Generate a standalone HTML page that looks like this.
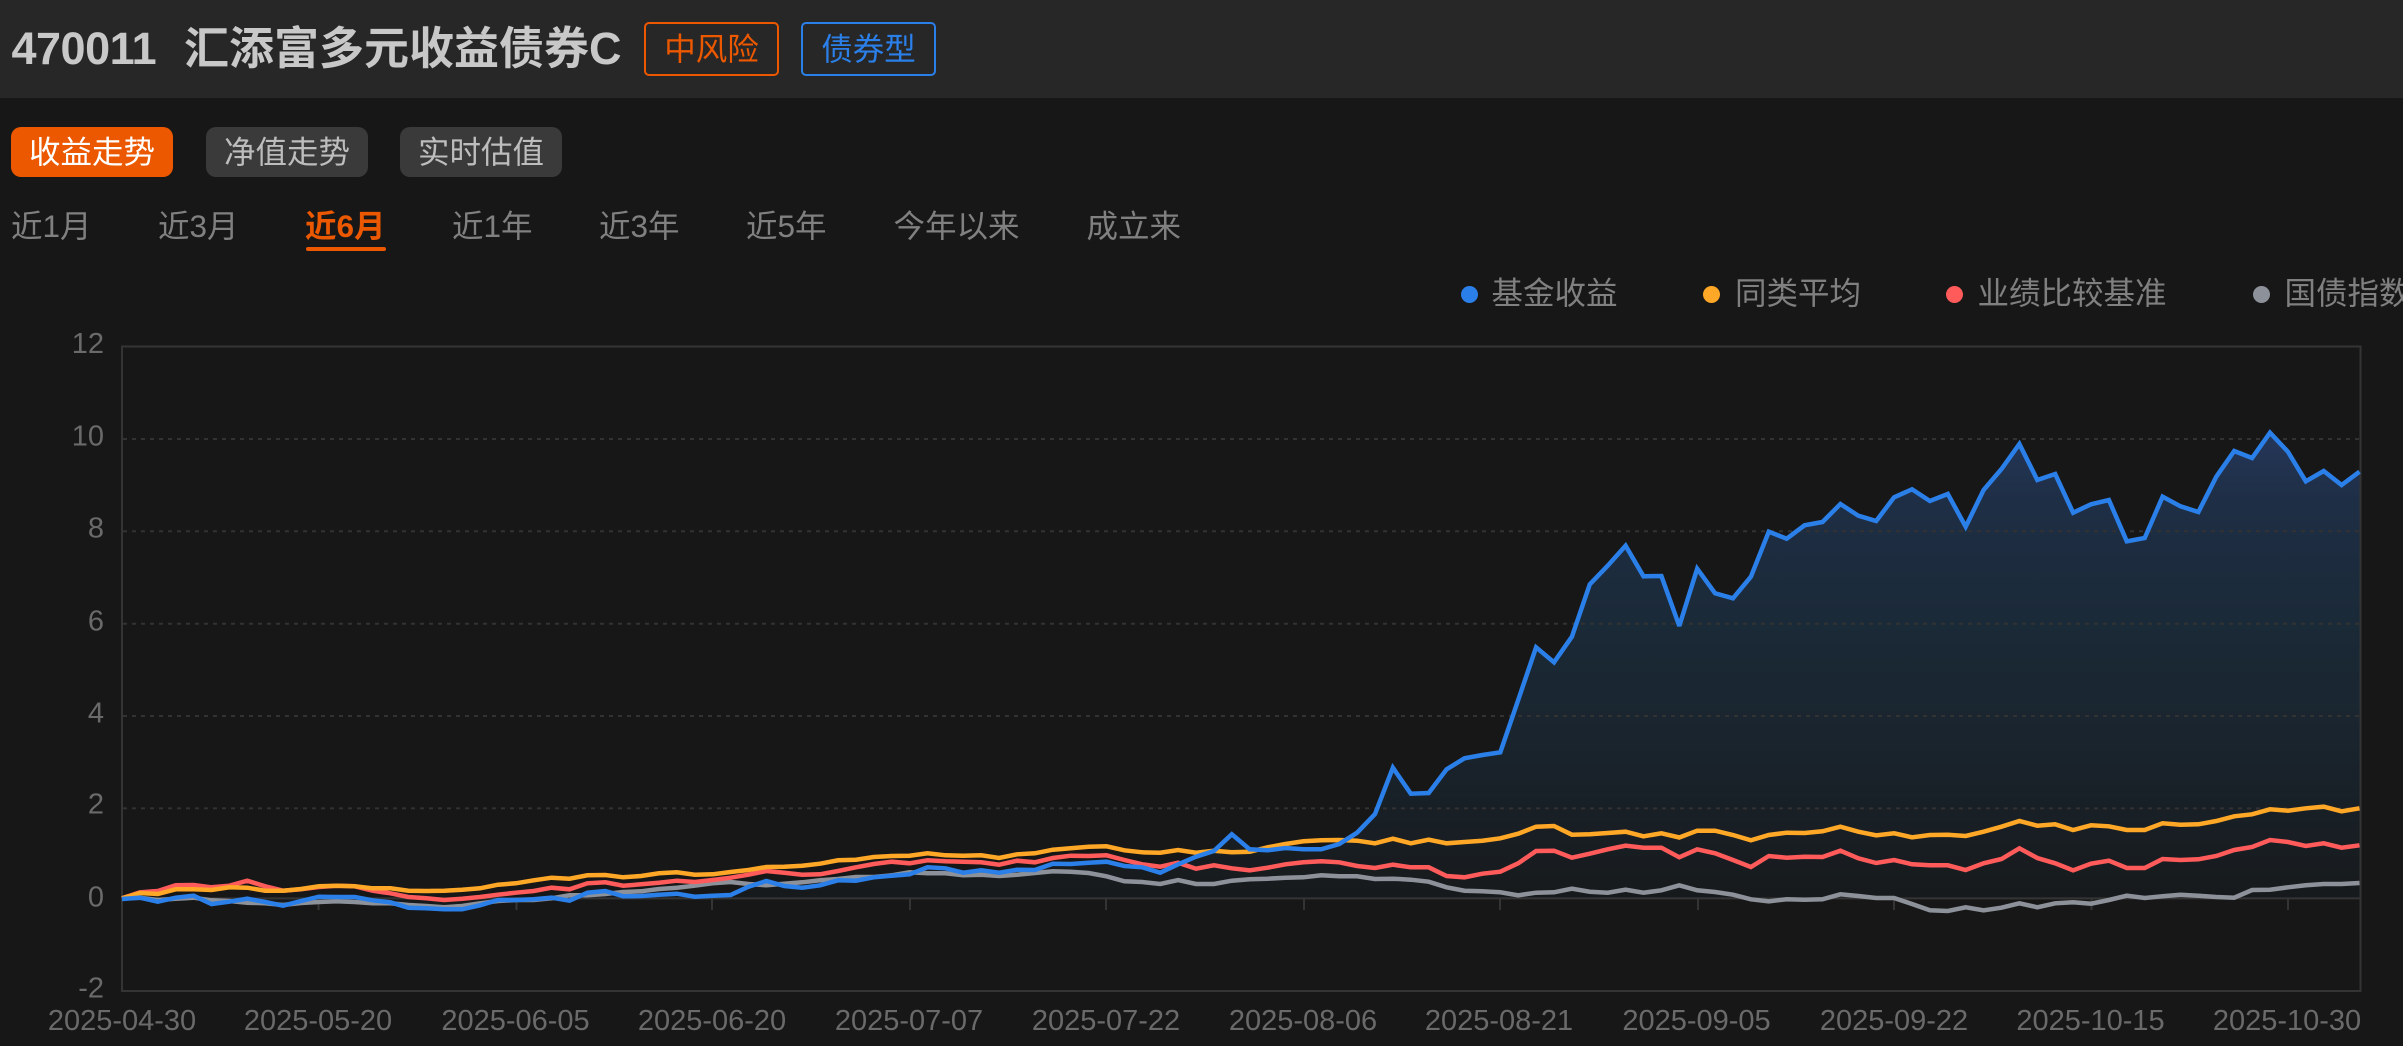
<!DOCTYPE html>
<html lang="zh"><head><meta charset="utf-8"><title>470011 汇添富多元收益债券C</title>
<style>
html,body{margin:0;padding:0;background:#171717;width:2403px;height:1046px;overflow:hidden}
body{position:relative;font-family:"Liberation Sans","Noto Sans CJK SC",sans-serif;font-size:31.5px}
.a{position:absolute;white-space:nowrap}
.hd{left:0;top:0;width:2403px;height:98px;background:#272727}
.num{left:11.5px;top:22px;line-height:54px;font-size:45px;font-weight:700;color:#c8c8c8;letter-spacing:-.5px}
.ttl{left:184px;top:22px;line-height:54px;font-size:45px;font-weight:700;color:#c8c8c8}
.tag{top:22px;height:50px;width:131px;border:2px solid;border-radius:5px;line-height:50px;text-align:center;color:inherit}
.btn{top:127px;height:50px;width:162px;border-radius:10px;line-height:50px;text-align:center;background:#3a3a3a;color:#bdbdbd}
.tab{top:202px;line-height:48px;color:#808080}
.leg{top:269px;line-height:48px;color:#808080}
.dot{top:285.5px;width:17px;height:17px;border-radius:50%}
svg{position:absolute;left:0;top:0}
svg text{font-family:"Liberation Sans",sans-serif;font-size:29px;fill:#6a6a6a}
</style></head><body>
<div class="a hd"></div>
<div class="a num">470011</div>
<div class="a ttl">汇添富多元收益债券C</div>
<div class="a tag" style="left:644px;color:#ec5800;border-color:#ec5800">中风险</div>
<div class="a tag" style="left:801px;color:#2b7fe8;border-color:#2b7fe8">债券型</div>
<div class="a btn" style="left:11px;background:#ec5800;color:#fff">收益走势</div>
<div class="a btn" style="left:206px">净值走势</div>
<div class="a btn" style="left:400px">实时估值</div>
<div class="a tab" style="left:11px">近1月</div>
<div class="a tab" style="left:158px">近3月</div>
<div class="a tab" style="left:305px;color:#ec5800;font-weight:700">近6月</div>
<div class="a" style="left:306px;top:247px;width:80px;height:4px;border-radius:2px;background:#ec5800"></div>
<div class="a tab" style="left:452px">近1年</div>
<div class="a tab" style="left:599px">近3年</div>
<div class="a tab" style="left:746px">近5年</div>
<div class="a tab" style="left:893.5px">今年以来</div>
<div class="a tab" style="left:1086.5px">成立来</div>
<div class="a dot" style="left:1460.5px;background:#2b7fe8"></div><div class="a leg" style="left:1491.5px">基金收益</div>
<div class="a dot" style="left:1703px;background:#ffa726"></div><div class="a leg" style="left:1735px">同类平均</div>
<div class="a dot" style="left:1946px;background:#ff5b5b"></div><div class="a leg" style="left:1977.5px">业绩比较基准</div>
<div class="a dot" style="left:2252.5px;background:#8d9199"></div><div class="a leg" style="left:2284.5px">国债指数</div>
<svg width="2403" height="1046" viewBox="0 0 2403 1046">
<defs><linearGradient id="g" gradientUnits="userSpaceOnUse" x1="0" y1="432" x2="0" y2="898">
<stop offset="0" stop-color="#25375a"/><stop offset=".15" stop-color="#1e2e45"/><stop offset=".4" stop-color="#1b2a38"/><stop offset=".7" stop-color="#19232c"/><stop offset="1" stop-color="#171a1c"/></linearGradient></defs>
<polygon fill="url(#g)" points="122,899 139.9,897.7 157.8,901.7 175.7,897.7 193.6,895.7 211.5,904 229.4,901.7 247.3,898.7 265.2,902 283.1,905.7 301,901 318.9,896.7 336.8,897 354.7,897 372.6,900.3 390.5,902.3 408.4,907.7 426.3,908.3 444.2,909.3 462.1,909.3 480,905.3 497.9,900 515.8,900 533.7,899.3 551.6,897.7 569.5,900.7 587.4,892.7 605.3,891 623.2,896.3 641.1,896 659,894.7 676.9,893.7 694.8,896.7 712.7,895.7 730.6,895 748.5,886.7 766.4,881 784.3,886 802.2,887.7 820.1,885.3 838,880.3 855.9,880.7 873.8,877.3 891.7,875.7 909.6,874.3 927.5,867.3 945.4,868.3 963.3,872.7 981.2,870.3 999.1,872.7 1017,869.7 1034.9,870 1052.8,863.7 1070.7,864 1088.6,862.7 1106.5,861.7 1124.4,866 1142.3,867.3 1160.2,872.7 1178.1,864.3 1196,856.7 1213.9,851 1231.8,834.3 1249.7,849.3 1267.6,850.3 1285.5,848 1303.4,849.3 1321.3,849.3 1339.2,844 1357.1,832.7 1375,814 1392.9,767.7 1410.8,793.7 1428.7,793 1446.6,769.3 1464.5,758.3 1482.4,755 1500.3,752.3 1518.2,700 1536.1,647.3 1554,662.3 1571.9,636.7 1589.8,584.3 1607.7,565.7 1625.6,545.7 1643.5,576.3 1661.4,576 1679.3,626 1697.2,568.7 1715.1,593.3 1733,598.3 1750.9,576.7 1768.8,531.7 1786.7,538.7 1804.6,525.3 1822.5,522 1840.4,504 1858.3,515.7 1876.2,521 1894.1,497.3 1912,489.3 1929.9,501 1947.8,494 1965.7,526.7 1983.6,490 2001.5,469 2019.4,444 2037.3,480 2055.2,474 2073.1,512.7 2091,504.3 2108.9,500 2126.8,541.3 2144.7,538 2162.6,496.7 2180.5,506.3 2198.4,512 2216.3,476.7 2234.2,451 2252.1,458 2270,432.7 2287.9,451.7 2305.8,481.3 2323.7,471 2341.6,485 2359.5,471.7 2359.5,898.5 122,898.5"/>
<g stroke="#323232" stroke-width="2" stroke-dasharray="4 5" fill="none">
<path d="M123 439H2360M123 531.3H2360M123 623.7H2360M123 716H2360M123 808.4H2360"/>
</g>
<g stroke="#343434" stroke-width="2" fill="none">
<path d="M122 346.5H2360.5V991H122ZM122 898.4H2360"/>
<path d="M318.5 898V910M516.5 898V910M712 898V910M910 898V910M1106 898V910M1304 898V910M1500 898V910M1698 898V910M1894 898V910M2091.5 898V910M2288 898V910"/>
</g>
<g fill="none" stroke-width="4.5" stroke-linejoin="miter" stroke-miterlimit="3">
<polyline stroke="#8d9199" points="122,898.3 139.9,897.7 157.8,900 175.7,898.7 193.6,897.7 211.5,900.3 229.4,901 247.3,902.7 265.2,903.3 283.1,905 301,903 318.9,902 336.8,901.3 354.7,902 372.6,903.3 390.5,903.3 408.4,905 426.3,906 444.2,907.3 462.1,906 480,903.3 497.9,901 515.8,900 533.7,900 551.6,898.3 569.5,895.3 587.4,895.3 605.3,894 623.2,892 641.1,891.3 659,889 676.9,887.7 694.8,885.7 712.7,883.3 730.6,882 748.5,884 766.4,885.3 784.3,883.7 802.2,882.3 820.1,880.3 838,879 855.9,877 873.8,877 891.7,875.3 909.6,872.3 927.5,873.3 945.4,873.3 963.3,875.3 981.2,874.7 999.1,876 1017,874.7 1034.9,873 1052.8,871.3 1070.7,871.7 1088.6,873 1106.5,876.3 1124.4,881.3 1142.3,882 1160.2,884 1178.1,880 1196,884 1213.9,884 1231.8,880.7 1249.7,879.3 1267.6,878.7 1285.5,877.7 1303.4,877.3 1321.3,875.3 1339.2,876.3 1357.1,876.3 1375,879 1392.9,878.7 1410.8,879.7 1428.7,881.7 1446.6,887.3 1464.5,890.7 1482.4,891.3 1500.3,892.3 1518.2,895.3 1536.1,892.7 1554,892.3 1571.9,888.7 1589.8,891.7 1607.7,892.7 1625.6,889.7 1643.5,892.7 1661.4,890.3 1679.3,885.3 1697.2,890.3 1715.1,892 1733,894.7 1750.9,899.3 1768.8,901.3 1786.7,899.3 1804.6,899.7 1822.5,899.3 1840.4,894.3 1858.3,896 1876.2,898 1894.1,898 1912,904 1929.9,910.3 1947.8,911 1965.7,907.3 1983.6,910.3 2001.5,907.7 2019.4,903.3 2037.3,907.3 2055.2,903.3 2073.1,902.3 2091,903.7 2108.9,900 2126.8,895.7 2144.7,898 2162.6,896.3 2180.5,894.7 2198.4,895.7 2216.3,897 2234.2,897.7 2252.1,890 2270,889.7 2287.9,887.3 2305.8,885.3 2323.7,884 2341.6,884 2359.5,883"/>
<polyline stroke="#ff5b5b" points="122,898.3 139.9,892.3 157.8,891 175.7,885.3 193.6,885 211.5,887.3 229.4,885.7 247.3,880.7 265.2,886.3 283.1,890.7 301,889.3 318.9,887 336.8,885.7 354.7,886.3 372.6,890.7 390.5,893.3 408.4,897 426.3,898.3 444.2,900 462.1,898.7 480,897 497.9,894.7 515.8,892.7 533.7,891 551.6,887.7 569.5,889.3 587.4,883.3 605.3,882.3 623.2,885.7 641.1,884.3 659,882.7 676.9,880.7 694.8,882 712.7,880 730.6,877.7 748.5,874.7 766.4,871 784.3,872.7 802.2,874.7 820.1,874.3 838,871 855.9,867.3 873.8,864 891.7,861.7 909.6,863.3 927.5,860.3 945.4,861.3 963.3,861.7 981.2,862.3 999.1,864.7 1017,860.7 1034.9,862.3 1052.8,858 1070.7,855.7 1088.6,856 1106.5,855.3 1124.4,860 1142.3,864.3 1160.2,866.7 1178.1,862.7 1196,868.7 1213.9,865.3 1231.8,868.3 1249.7,870.3 1267.6,867.7 1285.5,864.3 1303.4,862.3 1321.3,861.3 1339.2,862.3 1357.1,866 1375,868 1392.9,864.7 1410.8,867.3 1428.7,867.3 1446.6,876 1464.5,877.3 1482.4,873.7 1500.3,871.7 1518.2,863.3 1536.1,851 1554,850.7 1571.9,857.7 1589.8,853.7 1607.7,849.3 1625.6,845.7 1643.5,847.7 1661.4,847.7 1679.3,857.3 1697.2,849.3 1715.1,853.3 1733,860 1750.9,867 1768.8,856 1786.7,857.7 1804.6,856.7 1822.5,857 1840.4,850.7 1858.3,858.3 1876.2,863 1894.1,860 1912,864.3 1929.9,865.3 1947.8,865.3 1965.7,870 1983.6,863.3 2001.5,859 2019.4,848.3 2037.3,858 2055.2,863.3 2073.1,870.3 2091,863.7 2108.9,860.7 2126.8,868 2144.7,868 2162.6,859 2180.5,860 2198.4,859.3 2216.3,856 2234.2,850 2252.1,847 2270,840 2287.9,842 2305.8,846 2323.7,843.3 2341.6,847.7 2359.5,845.3"/>
<polyline stroke="#ffa726" points="122,898.3 139.9,893 157.8,894 175.7,889.3 193.6,889.3 211.5,890 229.4,887.3 247.3,887.7 265.2,890.7 283.1,890.7 301,889 318.9,886.3 336.8,885.7 354.7,886.3 372.6,888.3 390.5,888.3 408.4,890.7 426.3,891 444.2,890.7 462.1,889.7 480,888.3 497.9,884.7 515.8,883.3 533.7,880.3 551.6,877.7 569.5,878.7 587.4,875.3 605.3,875 623.2,877.3 641.1,876 659,873.3 676.9,872.3 694.8,874.7 712.7,874.3 730.6,872 748.5,870 766.4,867 784.3,866.7 802.2,865.7 820.1,863.7 838,860.3 855.9,859.7 873.8,857 891.7,856 909.6,855.7 927.5,853.3 945.4,855.3 963.3,855.7 981.2,855.3 999.1,858 1017,854.3 1034.9,853.3 1052.8,849.7 1070.7,848.3 1088.6,846.7 1106.5,846.3 1124.4,850.3 1142.3,852.3 1160.2,852.7 1178.1,850 1196,852.7 1213.9,850.7 1231.8,852.3 1249.7,851.7 1267.6,847.3 1285.5,844 1303.4,841.3 1321.3,840.3 1339.2,840 1357.1,840.7 1375,843.3 1392.9,838.7 1410.8,843.3 1428.7,839.7 1446.6,843.3 1464.5,842 1482.4,840.7 1500.3,838.3 1518.2,833.7 1536.1,826.7 1554,826 1571.9,834.7 1589.8,834.3 1607.7,833 1625.6,831.7 1643.5,836.3 1661.4,833.3 1679.3,837.5 1697.2,830.7 1715.1,830.7 1733,835 1750.9,840.3 1768.8,835 1786.7,832.7 1804.6,833 1822.5,831.3 1840.4,826.7 1858.3,831.7 1876.2,835.3 1894.1,833.3 1912,837.3 1929.9,835 1947.8,834.7 1965.7,836 1983.6,831.7 2001.5,826.7 2019.4,821 2037.3,825.7 2055.2,824.3 2073.1,830 2091,825.3 2108.9,826.3 2126.8,830 2144.7,830 2162.6,823.3 2180.5,824.7 2198.4,824.3 2216.3,821 2234.2,816.3 2252.1,814.3 2270,809.3 2287.9,810.7 2305.8,808.3 2323.7,806.7 2341.6,811.3 2359.5,808.3"/>
<polyline stroke="#2b7fe8" points="122,899 139.9,897.7 157.8,901.7 175.7,897.7 193.6,895.7 211.5,904 229.4,901.7 247.3,898.7 265.2,902 283.1,905.7 301,901 318.9,896.7 336.8,897 354.7,897 372.6,900.3 390.5,902.3 408.4,907.7 426.3,908.3 444.2,909.3 462.1,909.3 480,905.3 497.9,900 515.8,900 533.7,899.3 551.6,897.7 569.5,900.7 587.4,892.7 605.3,891 623.2,896.3 641.1,896 659,894.7 676.9,893.7 694.8,896.7 712.7,895.7 730.6,895 748.5,886.7 766.4,881 784.3,886 802.2,887.7 820.1,885.3 838,880.3 855.9,880.7 873.8,877.3 891.7,875.7 909.6,874.3 927.5,867.3 945.4,868.3 963.3,872.7 981.2,870.3 999.1,872.7 1017,869.7 1034.9,870 1052.8,863.7 1070.7,864 1088.6,862.7 1106.5,861.7 1124.4,866 1142.3,867.3 1160.2,872.7 1178.1,864.3 1196,856.7 1213.9,851 1231.8,834.3 1249.7,849.3 1267.6,850.3 1285.5,848 1303.4,849.3 1321.3,849.3 1339.2,844 1357.1,832.7 1375,814 1392.9,767.7 1410.8,793.7 1428.7,793 1446.6,769.3 1464.5,758.3 1482.4,755 1500.3,752.3 1518.2,700 1536.1,647.3 1554,662.3 1571.9,636.7 1589.8,584.3 1607.7,565.7 1625.6,545.7 1643.5,576.3 1661.4,576 1679.3,626 1697.2,568.7 1715.1,593.3 1733,598.3 1750.9,576.7 1768.8,531.7 1786.7,538.7 1804.6,525.3 1822.5,522 1840.4,504 1858.3,515.7 1876.2,521 1894.1,497.3 1912,489.3 1929.9,501 1947.8,494 1965.7,526.7 1983.6,490 2001.5,469 2019.4,444 2037.3,480 2055.2,474 2073.1,512.7 2091,504.3 2108.9,500 2126.8,541.3 2144.7,538 2162.6,496.7 2180.5,506.3 2198.4,512 2216.3,476.7 2234.2,451 2252.1,458 2270,432.7 2287.9,451.7 2305.8,481.3 2323.7,471 2341.6,485 2359.5,471.7"/>
</g>
<g text-anchor="end">
<text x="104" y="353">12</text><text x="104" y="445.5">10</text><text x="104" y="537.5">8</text><text x="104" y="630.5">6</text><text x="104" y="722.5">4</text><text x="104" y="813.5">2</text><text x="104" y="906.5">0</text><text x="104" y="997.5">-2</text>
</g>
<g text-anchor="middle">
<text x="122" y="1030">2025-04-30</text><text x="318" y="1030">2025-05-20</text><text x="515.5" y="1030">2025-06-05</text><text x="712" y="1030">2025-06-20</text><text x="909" y="1030">2025-07-07</text><text x="1106" y="1030">2025-07-22</text><text x="1303" y="1030">2025-08-06</text><text x="1499" y="1030">2025-08-21</text><text x="1696.5" y="1030">2025-09-05</text><text x="1894" y="1030">2025-09-22</text><text x="2090.5" y="1030">2025-10-15</text><text x="2287" y="1030">2025-10-30</text>
</g>
</svg>
</body></html>
